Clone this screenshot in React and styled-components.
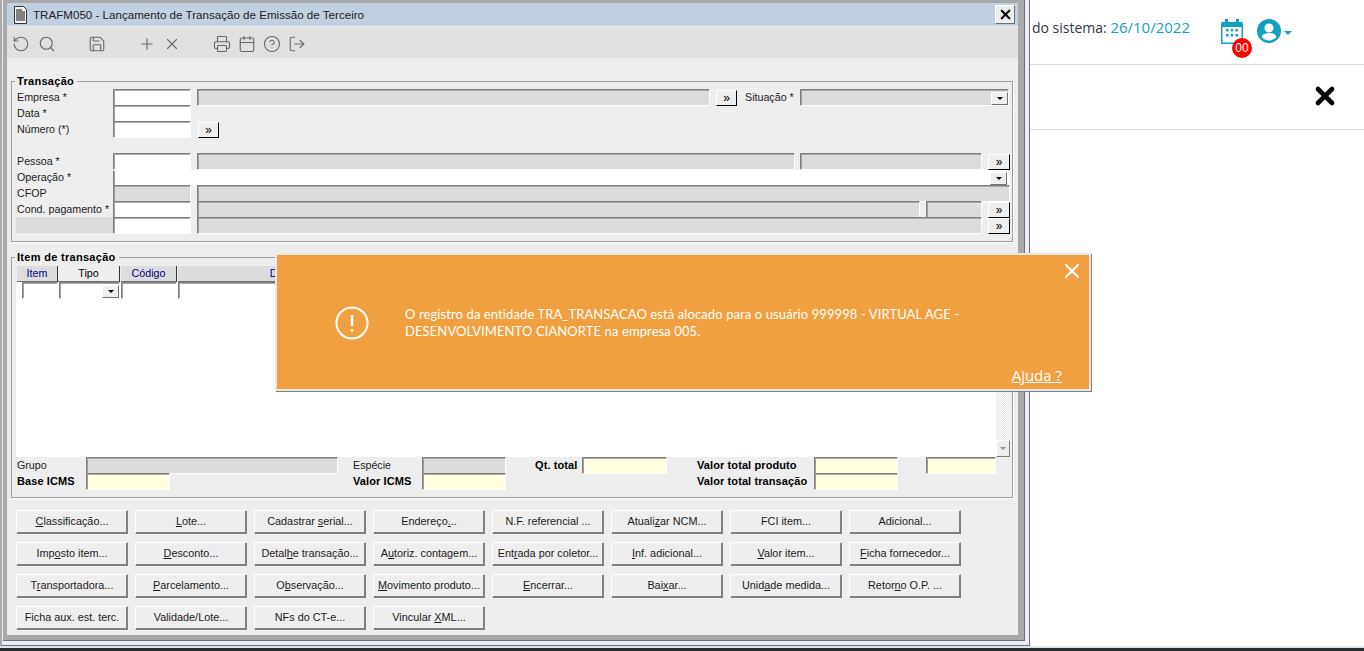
import React from "react";
import styled, { createGlobalStyle } from "styled-components";
import { RotateCcw, Search, Save, Plus, X, Printer, Calendar, CircleHelp, LogOut } from "lucide-react";

const GlobalStyle = createGlobalStyle`
  html, body {
    margin: 0;
    padding: 0;
    background: #fff;
    overflow: hidden;
  }
  * {
    box-sizing: border-box;
  }
`;

const Page = styled.div`
  position: relative;
  width: 1364px;
  height: 651px;
  overflow: hidden;
  background: #fff;
  display: flex;
  flex-direction: column;
  font-family: "Open Sans", sans-serif;
`;

const Backdrop = styled.div`
  flex: 1;
`;

const Header = styled.header`
  height: 65px;
  border-bottom: 1px solid #dcdcdc;
  display: flex;
  align-items: flex-start;
  justify-content: flex-end;
  padding: 19px 72px 0 0;
`;

const SystemDate = styled.div`
  font-size: 14px;
  line-height: 19px;
  margin-top: -1px;
  color: #33334a;
  margin-right: 31px;
  span {
    font-size: 15px;
    color: #12a0c0;
  }
`;

const IconSlot = styled.div`
  position: relative;
  width: 22px;
  height: 25px;
  margin-right: 14px;
`;

const Badge = styled.span`
  position: absolute;
  left: 11px;
  top: 19px;
  width: 20px;
  height: 20px;
  border-radius: 50%;
  background: #f00;
  color: #fff;
  font: 400 12px/20px "Liberation Sans", sans-serif;
  text-align: center;
`;

const UserMenu = styled.div`
  display: flex;
  align-items: center;
  gap: 3px;
  height: 24px;
`;

const Caret = styled.i`
  width: 0;
  height: 0;
  margin-top: 3px;
  border-left: 4px solid transparent;
  border-right: 4px solid transparent;
  border-top: 4px solid #12a0c0;
`;

const SubHeader = styled.div`
  height: 65px;
  border-bottom: 1px solid #dcdcdc;
  display: flex;
  align-items: center;
  justify-content: flex-end;
  padding: 0 25px 2px 0;
`;

const BottomStrip = styled.div`
  height: 5px;
  background: linear-gradient(#d9e7f2 0 2px, #2a2a2a 2px 100%);
`;

const WindowFrame = styled.div`
  position: absolute;
  left: 0;
  top: 0;
  width: 1030px;
  height: 646px;
  background: #ecebf8;
  border-left: 2px solid #a9a9a9;
  border-right: 1px solid #707070;
  border-bottom: 1px solid #707070;
  padding: 0 4px 4px 1px;
`;

const WindowInner = styled.div`
  height: 100%;
  display: flex;
  flex-direction: column;
  background: #a9a9a9;
  border-right: 1px solid #707070;
  border-bottom: 1px solid #707070;
  padding: 3px 6px 5px 4px;
  font: 10.7px/16px "Liberation Sans", sans-serif;
  color: #1c1c1c;
`;

const TitleBar = styled.div`
  height: 24px;
  flex: none;
  display: flex;
  align-items: center;
  background: #c0d0e0;
  border-bottom: 1px solid #eee;
  padding: 0 3px 0 6px;
  font-size: 11.6px;
  color: #222;
`;

const TitleText = styled.span`
  flex: 1;
  margin-left: 5px;
`;

const CloseButton = styled.div`
  width: 20px;
  height: 19px;
  display: flex;
  align-items: center;
  justify-content: center;
  background: #eee;
  border: 1px solid;
  border-color: #fff #707070 #707070 #fff;
`;

const ToolBar = styled.div`
  height: 31px;
  flex: none;
  display: flex;
  align-items: center;
  background: #e0e0e0;
  padding: 2px 0 0 5px;
  color: #6a6a6a;
`;

const Tool = styled.div`
  width: 18px;
  height: 18px;
  margin-left: ${(p) => p.$ml ?? 7}px;
  svg {
    display: block;
  }
`;

const Content = styled.div`
  flex: 1;
  background: #eee;
  padding: 23px 0 0 4px;
`;

const GroupBox = styled.section`
  position: relative;
  width: 1002px;
  height: ${(p) => p.$h}px;
  margin-bottom: 15px;
  border: 1px solid #a0a0a0;
  box-shadow: 1px 1px 0 #fff;
  padding: ${(p) => p.$top ?? 8}px 0 0 4px;
`;

const GroupTitle = styled.h2`
  position: absolute;
  left: 3px;
  top: -8px;
  margin: 0;
  padding: 0 3px 0 2px;
  background: #eee;
  font: 700 11px/15px "Liberation Sans", sans-serif;
  letter-spacing: 0.3px;
  color: #000;
`;

const Row = styled.div`
  display: flex;
  height: 16px;
  margin-top: ${(p) => p.$mt ?? 0}px;
`;

const Label = styled.label`
  flex: none;
  width: ${(p) => p.$w ?? 97}px;
  margin-left: ${(p) => p.$ml ?? 0}px;
  padding: 1px 0 0 ${(p) => p.$pad ?? 1}px;
  font-size: ${(p) => (p.$bold ? 11 : 10.7)}px;
  font-weight: ${(p) => (p.$bold ? 700 : 400)};
  letter-spacing: ${(p) => (p.$bold ? 0.1 : 0)}px;
  background: ${(p) => (p.$shaded ? "#dcdcdc" : "transparent")};
  white-space: nowrap;
  line-height: 15px;
  color: ${(p) => (p.$bold ? "#000" : "#1c1c1c")};
`;

const toneColors = { white: "#fff", gray: "#dcdcdc", yellow: "#ffffe0" };

const Field = styled.div`
  position: relative;
  flex: none;
  width: ${(p) => p.$w}px;
  height: ${(p) => (p.$flat ? 16 : 17)}px;
  margin-top: ${(p) => (p.$flat ? 1 : 0)}px;
  margin-left: ${(p) => p.$ml ?? 0}px;
  background: ${(p) => toneColors[p.$tone ?? "white"]};
  border: 1px solid;
  border-color: ${(p) => (p.$flat ? "#fff" : "#808080")} #fff #fff #808080;
  box-shadow: inset 1px 0 0 #a0a0a0, inset 0 1px 0 ${(p) => (p.$flat ? "#fff" : "#a8a8a8")};
`;

const ComboArrow = styled.div`
  position: absolute;
  right: ${(p) => p.$right ?? 0}px;
  top: ${(p) => p.$top ?? 2}px;
  width: 17px;
  height: 13px;
  display: flex;
  align-items: center;
  justify-content: center;
  background: #eee;
  border: 1px solid;
  border-color: #fff #707070 #707070 #fff;
  &::after {
    content: "";
    border-left: 3px solid transparent;
    border-right: 3px solid transparent;
    border-top: 3px solid #000;
  }
`;

const MoreButton = styled.div`
  position: relative;
  z-index: 1;
  flex: none;
  width: ${(p) => p.$w ?? 22}px;
  height: 16px;
  margin: 1px 0 0 ${(p) => p.$ml ?? 6}px;
  display: flex;
  align-items: center;
  justify-content: center;
  background: #eee;
  border: 1px solid;
  border-color: #fff #000 #000 #fff;
  font-size: 12px;
  line-height: 13px;
  color: #000;
`;

const TableArea = styled.div`
  display: flex;
  height: 191px;
`;

const TablePane = styled.div`
  width: 980px;
  display: flex;
  flex-direction: column;
  background: #fff;
`;

const TableHead = styled.div`
  display: flex;
  height: 16px;
  flex: none;
  padding-left: 1px;
  background: #eee;
`;

const HeadCell = styled.div`
  flex: ${(p) => (p.$w ? `none` : 1)};
  width: ${(p) => (p.$w ? `${p.$w}px` : "auto")};
  margin-left: ${(p) => p.$ml ?? 0}px;
  text-align: center;
  line-height: 15px;
  background: ${(p) => (p.$active ? "#eee" : "#dcdcdc")};
  color: ${(p) => (p.$active ? "#000" : "#000080")};
  border-right: 1px solid #333;
  border-bottom: 1px solid #707070;
`;

const TableRow = styled.div`
  display: flex;
  height: 16px;
  flex: none;
  padding-left: 6px;
`;

const ScrollBar = styled.div`
  width: 14px;
  display: flex;
  flex-direction: column;
  justify-content: flex-end;
  background: repeating-conic-gradient(#e6e6e6 0 25%, #fff 0 50%) 0 0 / 2px 2px;
`;

const ScrollButton = styled.div`
  height: 17px;
  display: flex;
  align-items: center;
  justify-content: center;
  background: #eee;
  border: 1px solid;
  border-color: #fff #808080 #808080 #fff;
  &::after {
    content: "";
    border-left: 3px solid transparent;
    border-right: 3px solid transparent;
    border-top: 3px solid #909090;
  }
`;

const ButtonGrid = styled.div`
  display: grid;
  grid-template-columns: repeat(8, 112px);
  grid-auto-rows: 24px;
  column-gap: 7px;
  row-gap: 8px;
  margin: -3px 0 0 5px;
`;

const ActionButton = styled.div`
  display: flex;
  align-items: center;
  justify-content: center;
  background: #eee;
  border: 1px solid;
  border-color: #fff #808080 #808080 #fff;
  box-shadow: inset -1px -1px 0 #808080;
  white-space: nowrap;
  font-size: 10.85px;
  color: #1c1c1c;
  padding-bottom: 2px;
`;

const Toast = styled.div`
  position: absolute;
  left: 275px;
  top: 253px;
  width: 816px;
  height: 138px;
  display: flex;
  flex-direction: column;
  background: #f0a040;
  border: 2px solid #e8e8e8;
  box-shadow: 1px 1px 0 #808080;
  color: #fff;
`;

const ToastTop = styled.div`
  display: flex;
  justify-content: flex-end;
  padding: 4px 5px 0 0;
  height: 31px;
`;

const ToastBody = styled.div`
  flex: 1;
  display: flex;
  align-items: flex-start;
  padding: 20px 0 0 58px;
`;

const ToastIcon = styled.div`
  flex: none;
  width: 34px;
  height: 34px;
`;

const ToastText = styled.p`
  margin: 0 0 0 36px;
  width: 590px;
  font: 13px/17px "Lato", sans-serif;
  letter-spacing: 0.1px;
`;

const ToastFooter = styled.div`
  display: flex;
  justify-content: flex-end;
  padding: 0 27px 4px 0;
`;

const HelpLink = styled.a`
  font: 15px/19px "Open Sans", sans-serif;
  color: #fff;
  text-decoration: underline;
`;

const buttonLabels = [
  "&Classificação...", "&Lote...", "Cadastrar &serial...", "Endereço&...", "N.F. referencial ...", "Atuali&zar NCM...", "FCI item...", "Adicional...",
  "Imp&osto item...", "&Desconto...", "Detal&he transação...", "A&utoriz. contagem...", "Ent&rada por coletor...", "&Inf. adicional...", "&Valor item...", "&Ficha fornecedor...",
  "T&ransportadora...", "&Parcelamento...", "O&bservação...", "&Movimento produto...", "&Encerrar...", "Bai&xar...", "Unid&ade medida...", "Retor&no O.P. ...",
  "Ficha aux. est. terc.", "Validade/Lote...", "NFs do CT-e...", "Vincular &XML...",
];

// "&" marks the mnemonic letter, like in the old windows resources
const Mnemonic = ({ text }) => {
  const at = text.indexOf("&");
  if (at < 0) return text;
  return (
    <>
      {text.slice(0, at)}
      <u>{text[at + 1]}</u>
      {text.slice(at + 2)}
    </>
  );
};

const DocIcon = () => (
  <svg width="15" height="18" viewBox="0 0 15 18">
    <path d="M1.500 .5h9l3 3v14h-12z" fill="#f4f4f4" stroke="#333" />
    <path d="M3 4h6M3 6h9M3 8h9M3 10h9M3 12h9M3 14h9" stroke="#111" strokeWidth="1.2" />
  </svg>
);

const CalendarBadgeIcon = () => (
  <svg width="22" height="25" viewBox="0 0 22 25" fill="#12a0c0">
    <path d="M4 0h3v3h8V0h3v3h2.500A1.500 1.500 0 0 1 22 4.500v19a1.500 1.500 0 0 1-1.500 1.500h-19A1.500 1.500 0 0 1 0 23.500v-19A1.500 1.500 0 0 1 1.500 3H4zM1.500 8v15.500h19V8z" />
    <path d="M5 10h2.500v2.500H5zM9.700 10h2.500v2.500H9.700zM14.500 10H17v2.500h-2.500zM5 15h2.500v2.500H5zM9.700 15h2.500v2.500H9.700zM14.500 15H17v2.500h-2.500z" />
  </svg>
);

const UserIcon = () => (
  <svg width="24" height="24" viewBox="0 0 24 24">
    <circle cx="12" cy="12" r="12" fill="#12a0c0" />
    <circle cx="12" cy="9" r="4.500" fill="#fff" />
    <path d="M4.500 18c1-3 4-4 7.500-4s6.500 1 7.500 4c-2 2-4.500 3.500-7.500 3.500S6.500 20 4.500 18z" fill="#fff" />
  </svg>
);

const tools = [
  [RotateCcw, 0], [Search, 8], [Save, 32], [Plus, 32], [X, 7], [Printer, 32], [Calendar, 7], [CircleHelp, 7], [LogOut, 7],
];

const App = () => (
  <Page>
    <GlobalStyle />
    <Backdrop>
      <Header>
        <SystemDate>
          Data do sistema: <span>26/10/2022</span>
        </SystemDate>
        <IconSlot>
          <CalendarBadgeIcon />
          <Badge>00</Badge>
        </IconSlot>
        <UserMenu>
          <UserIcon />
          <Caret />
        </UserMenu>
      </Header>
      <SubHeader>
        <X size={28} strokeWidth={4} color="#000" />
      </SubHeader>
    </Backdrop>
    <BottomStrip />

    <WindowFrame>
      <WindowInner>
        <TitleBar>
          <DocIcon />
          <TitleText>TRAFM050 - Lançamento de Transação de Emissão de Terceiro</TitleText>
          <CloseButton>
            <X size={15} strokeWidth={3.5} color="#000" />
          </CloseButton>
        </TitleBar>
        <ToolBar>
          {tools.map(([Icon, ml], i) => (
            <Tool key={i} $ml={ml}>
              <Icon size={18} strokeWidth={1.5} />
            </Tool>
          ))}
        </ToolBar>
        <Content>
          <GroupBox $h={161} $top={7}>
            <GroupTitle>Transação</GroupTitle>
            <Row>
              <Label>Empresa *</Label>
              <Field $w={78} />
              <Field $w={513} $ml={6} $tone="gray" />
              <MoreButton $w={21}>»</MoreButton>
              <Label $w={55} $ml={8} $pad={0}>Situação *</Label>
              <Field $w={209} $tone="gray"><ComboArrow /></Field>
            </Row>
            <Row>
              <Label>Data *</Label>
              <Field $w={78} />
            </Row>
            <Row>
              <Label>Número (*)</Label>
              <Field $w={78} />
              <MoreButton $w={21} $ml={7}>»</MoreButton>
            </Row>
            <Row $mt={16}>
              <Label>Pessoa *</Label>
              <Field $w={78} />
              <Field $w={598} $ml={6} $tone="gray" />
              <Field $w={182} $ml={5} $tone="gray" />
              <MoreButton>»</MoreButton>
            </Row>
            <Row>
              <Label>Operação *</Label>
              <Field $w={897} $flat><ComboArrow $right={2} $top={1} /></Field>
            </Row>
            <Row>
              <Label>CFOP</Label>
              <Field $w={78} $tone="gray" />
              <Field $w={813} $ml={6} $tone="gray" />
            </Row>
            <Row>
              <Label>Cond. pagamento *</Label>
              <Field $w={78} />
              <Field $w={723} $ml={6} $tone="gray" />
              <Field $w={56} $ml={6} $tone="gray" />
              <MoreButton>»</MoreButton>
            </Row>
            <Row>
              <Label $shaded />
              <Field $w={78} />
              <Field $w={785} $ml={6} $tone="gray" />
              <MoreButton>»</MoreButton>
            </Row>
          </GroupBox>

          <GroupBox $h={241}>
            <GroupTitle>Item de transação</GroupTitle>
            <TableArea>
              <TablePane>
                <TableHead>
                  <HeadCell $w={41}>Item</HeadCell>
                  <HeadCell $w={62} $active>Tipo</HeadCell>
                  <HeadCell $w={56} $ml={1}>Código</HeadCell>
                  <HeadCell $w={232} $ml={1}>Descrição</HeadCell>
                  <HeadCell />
                </TableHead>
                <TableRow>
                  <Field $w={36} />
                  <Field $w={61} $ml={1}><ComboArrow /></Field>
                  <Field $w={56} $ml={1} />
                  <Field $w={802} $ml={1} />
                </TableRow>
              </TablePane>
              <ScrollBar>
                <ScrollButton />
              </ScrollBar>
            </TableArea>
            <Row>
              <Label $w={70}>Grupo</Label>
              <Field $w={252} $tone="gray" />
              <Label $w={69} $ml={15} $pad={0}>Espécie</Label>
              <Field $w={84} $tone="gray" />
              <Label $w={47} $ml={29} $pad={0} $bold>Qt. total</Label>
              <Field $w={85} $tone="yellow" />
              <Label $w={117} $ml={30} $pad={0} $bold>Valor total produto</Label>
              <Field $w={84} $tone="yellow" />
              <Field $w={70} $ml={28} $tone="yellow" />
            </Row>
            <Row>
              <Label $w={70} $bold>Base ICMS</Label>
              <Field $w={84} $tone="yellow" />
              <Label $w={69} $ml={183} $pad={0} $bold>Valor ICMS</Label>
              <Field $w={84} $tone="yellow" />
              <Label $w={117} $ml={191} $pad={0} $bold>Valor total transação</Label>
              <Field $w={84} $tone="yellow" />
            </Row>
          </GroupBox>

          <ButtonGrid>
            {buttonLabels.map((label) => (
              <ActionButton key={label}>
                <span><Mnemonic text={label} /></span>
              </ActionButton>
            ))}
          </ButtonGrid>
        </Content>
      </WindowInner>
    </WindowFrame>

    <Toast>
      <ToastTop>
        <X size={24} strokeWidth={2} />
      </ToastTop>
      <ToastBody>
        <ToastIcon>
          <svg width="34" height="34" viewBox="0 0 34 34" fill="none" stroke="#fff">
            <circle cx="17" cy="17" r="15.500" strokeWidth="2" />
            <path d="M17 9v11" strokeWidth="2.500" />
            <path d="M17 23v2.500" strokeWidth="2.500" />
          </svg>
        </ToastIcon>
        <ToastText>
          O registro da entidade TRA_TRANSACAO está alocado para o usuário 999998 - VIRTUAL AGE - DESENVOLVIMENTO CIANORTE na empresa 005.
        </ToastText>
      </ToastBody>
      <ToastFooter>
        <HelpLink>Ajuda ?</HelpLink>
      </ToastFooter>
    </Toast>
  </Page>
);

export default App;
